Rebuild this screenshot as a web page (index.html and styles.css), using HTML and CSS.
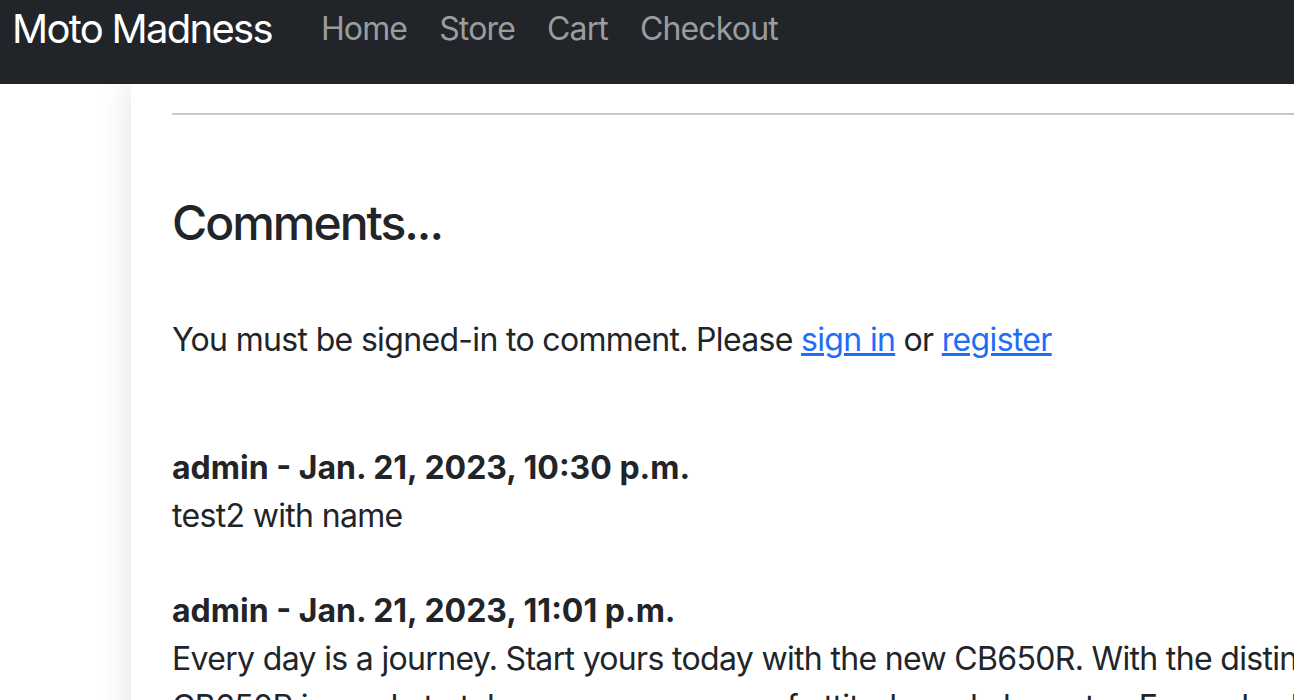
FILE: index.html
```html
<!DOCTYPE html>
<html lang="en">
<head>
<meta charset="utf-8">
<title>Moto Madness</title>
<link rel="stylesheet" href="styles.css">
</head>
<body>
<nav class="navbar">
  <a class="brand" href="#">Moto Madness</a>
  <ul class="nav-links">
    <li><a href="#">Home</a></li>
    <li><a href="#">Store</a></li>
    <li><a href="#">Cart</a></li>
    <li><a href="#">Checkout</a></li>
  </ul>
</nav>
<div class="page">
  <main class="card">
    <hr class="divider">
    <h3 class="comments-title">Comments...</h3>
    <p class="signin-note">You must be signed-in to comment. Please <a href="#">sign in</a> or <a href="#">register</a></p>
    <div class="comment-list">
      <div class="comment">
        <div class="comment-meta">admin - Jan. 21, 2023, 10:30 p.m.</div>
        <div class="comment-body">test2 with name</div>
      </div>
      <div class="comment">
        <div class="comment-meta">admin - Jan. 21, 2023, 11:01 p.m.</div>
        <div class="comment-body">Every day is a journey. Start yours today with the new CB650R. With the distinctive styling of the new<br>CB650R is ready to take on every corner of attitude and character. Every day begins with an open road.</div>
      </div>
    </div>
  </main>
</div>
</body>
</html>
```
FILE: styles.css
```css
html, body {
  margin: 0;
  padding: 0;
  background: #fff;
  overflow: hidden;
}
body {
  font-family: Inter, "Liberation Sans", sans-serif;
  font-size: 32px;
  line-height: 48px;
  color: #212529;
  width: 1294px;
  height: 700px;
}
.navbar {
  height: 84px;
  background: #212529;
  display: flex;
  align-items: flex-start;
  padding: 0 0 0 12px;
  box-sizing: border-box;
}
.brand {
  color: #fff;
  font-size: 40px;
  line-height: 58px;
  text-decoration: none;
  margin-right: 33px;
  letter-spacing: -1.7px;
}
.nav-links {
  display: flex;
  list-style: none;
  margin: 0;
  padding: 0;
}
.nav-links a {
  display: block;
  padding: 0 16px;
  color: #9a9c9e;
  text-decoration: none;
  font-size: 32px;
  line-height: 58px;
  letter-spacing: -0.85px;
}
.page {
  height: 616px;
  overflow: hidden;
}
.card {
  margin-left: 131px;
  width: 1400px;
  height: 700px;
  padding: 29px 0 0 41px;
  background: #fff;
  box-shadow: 0 0 32px rgba(0, 0, 0, 0.12);
  box-sizing: border-box;
}
.divider {
  border: 0;
  border-top: 2px solid #c8c9ca;
  margin: 0;
}
.comments-title {
  font-size: 48px;
  font-weight: 500;
  line-height: 58px;
  letter-spacing: -2px;
  margin: 79px 0 0;
}
.signin-note {
  margin: 64px 0 0;
  letter-spacing: -0.67px;
}
.signin-note a {
  color: #1f6ef8;
}
.comment-list {
  margin-top: 80px;
  display: flex;
  flex-direction: column;
  gap: 47px;
}
.comment-meta {
  font-weight: 700;
}
.comment-body {
  white-space: nowrap;
  letter-spacing: -0.67px;
}
```
